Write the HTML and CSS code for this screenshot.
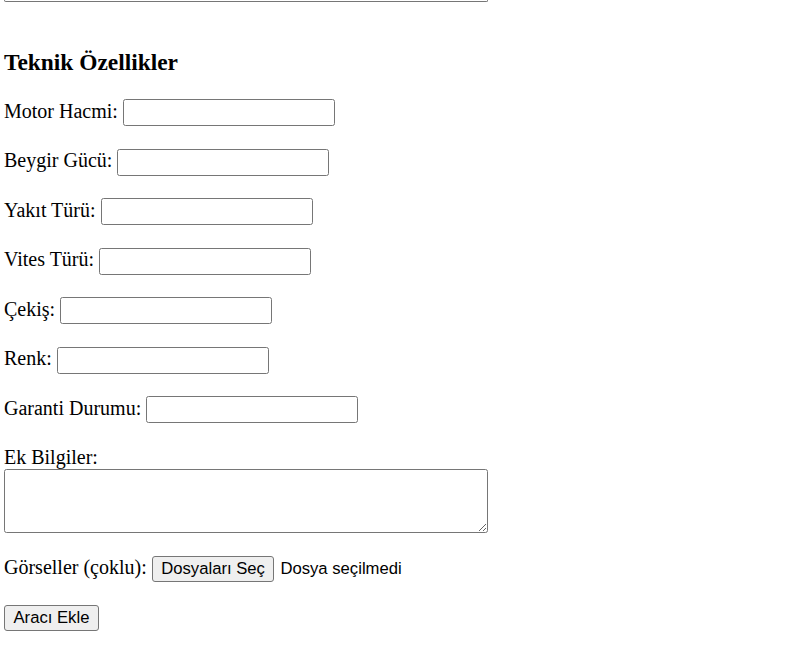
FILE: index.html
```html
<!DOCTYPE html>
<html lang="tr">
<head>
<meta charset="utf-8">
<title>Araç Ekle</title>
<link rel="stylesheet" href="styles.css">
</head>
<body>
<form class="form">
  <div class="prev-tail"></div>
  <h3 class="section-title">Teknik Özellikler</h3>
  <div class="row"><label class="lbl">Motor Hacmi:</label><input class="field" type="text"></div>
  <div class="row"><label class="lbl">Beygir Gücü:</label><input class="field" type="text"></div>
  <div class="row"><label class="lbl">Yakıt Türü:</label><input class="field" type="text"></div>
  <div class="row"><label class="lbl">Vites Türü:</label><input class="field" type="text"></div>
  <div class="row"><label class="lbl">Çekiş:</label><input class="field" type="text"></div>
  <div class="row"><label class="lbl">Renk:</label><input class="field" type="text"></div>
  <div class="row"><label class="lbl">Garanti Durumu:</label><input class="field" type="text"></div>
  <label class="lbl block">Ek Bilgiler:</label>
  <textarea class="area"></textarea>
  <div class="row file-row"><label class="lbl">Görseller (çoklu):</label><button type="button" class="btn">Dosyaları Seç</button><span class="file-status">Dosya seçilmedi</span></div>
  <div class="submit-row"><button type="submit" class="btn">Aracı Ekle</button></div>
</form>
</body>
</html>
```
FILE: styles.css
```css
html, body {
  margin: 0;
  padding: 0;
  background: #fff;
}
body {
  font-family: "Liberation Serif", "Times New Roman", serif;
  font-size: 20px;
  color: #000;
}
.form {
  padding-left: 4px;
}
.prev-tail {
  width: 484px;
  height: 2px;
  box-sizing: border-box;
  border: 1px solid #767676;
  border-top: none;
  border-radius: 0 0 3px 3px;
}
.section-title {
  font-size: 23.4px;
  font-weight: bold;
  line-height: 27px;
  margin: 47px 0 23px 0;
}
.row {
  display: flex;
  align-items: baseline;
  height: 27px;
  margin-bottom: 22.5px;
}
.lbl {
  line-height: 23px;
  margin-right: 5px;
}
.lbl.block {
  display: block;
  margin: 0;
}
.field {
  width: 212px;
  height: 27px;
  box-sizing: border-box;
  border: 1px solid #767676;
  border-radius: 2.5px;
  padding: 1px 2px;
  font-family: "Liberation Sans", Arial, sans-serif;
  font-size: 16.67px;
  margin: 0;
  background: #fff;
}
.area {
  display: block;
  width: 484px;
  height: 64px;
  box-sizing: border-box;
  border: 1px solid #767676;
  border-radius: 2.5px;
  padding: 2px;
  margin: 0 0 23px 0;
  font-family: "Liberation Mono", monospace;
  font-size: 16.67px;
}
.file-row {
  height: 26px;
}
.btn {
  height: 26px;
  box-sizing: border-box;
  background: #efefef;
  border: 1px solid #767676;
  border-radius: 3px;
  padding: 0 8.5px;
  font-family: "Liberation Sans", Arial, sans-serif;
  font-size: 16.67px;
  color: #000;
  margin: 0;
}
.file-status {
  font-family: "Liberation Sans", Arial, sans-serif;
  font-size: 16.67px;
  margin-left: 6px;
}
.submit-row {
  display: flex;
  padding-top: 1px;
}
```
